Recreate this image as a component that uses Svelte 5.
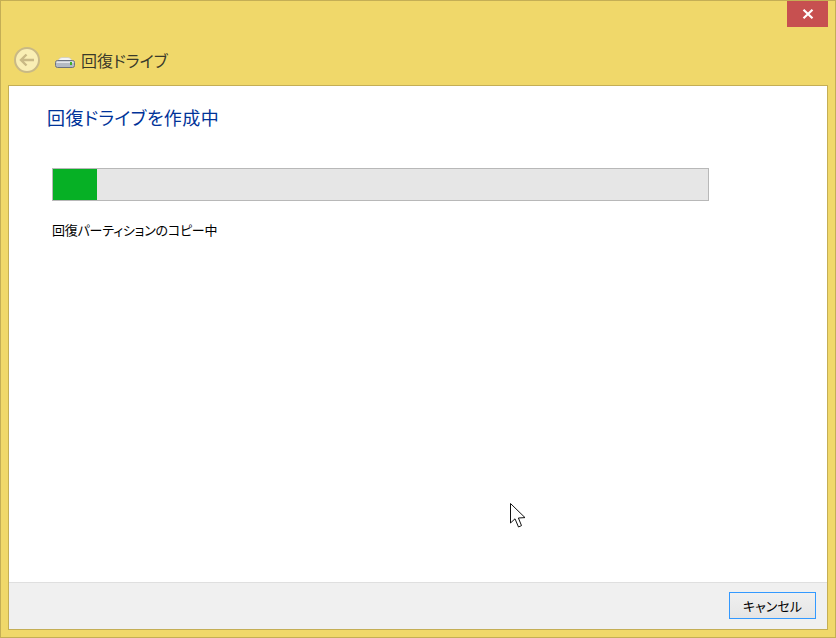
<script>
    const title = "回復ドライブ";
    const heading = "回復ドライブを作成中";
    const status = "回復パーティションのコピー中";
    let progress = 6.7;
</script>

<div class="window">
    <div class="titlebar">
        <button class="close" type="button" aria-label="閉じる">
            <svg width="12" height="10" viewBox="0 0 12 10">
                <path d="M1.5 0.8 L10.5 9.2 M10.5 0.8 L1.5 9.2" stroke="#fff" stroke-width="2.2" fill="none" />
            </svg>
        </button>
    </div>
    <div class="navbar">
        <div class="back">
            <svg width="16" height="14" viewBox="0 0 16 14">
                <path d="M7.5 1.5 L2 7 L7.5 12.5 M2.5 7 H15" stroke="#c9b985" stroke-width="2.4" fill="none" />
            </svg>
        </div>
        <svg class="drive" width="20" height="11" viewBox="0 0 20 11">
            <path d="M3 4 Q4 0.5 7 0.5 H13 Q16 0.5 17 4 Z" fill="#f4f4f4" stroke="#c4c4c4" stroke-width="0.6" />
            <rect x="0.5" y="3.5" width="19" height="7" rx="2" fill="#b4bac4" stroke="#6c7280" />
            <rect x="1.5" y="4.5" width="17" height="1.5" fill="#e4e6ea" />
            <rect x="15" y="5" width="2" height="3" fill="#3fae2a" />
        </svg>
        <span class="title">{title}</span>
    </div>
    <div class="client">
        <div class="main">
            <h1>{heading}</h1>
            <div class="track">
                <div class="bar" style="width: {progress}%"></div>
            </div>
            <p>{status}</p>
        </div>
        <div class="footer">
            <button class="cancel" type="button">キャンセル</button>
        </div>
    </div>
    <svg class="cursor" width="17" height="26" viewBox="0 0 17 26">
        <path d="M0.5 0.5 V20 L5 15.8 L8.5 24 L11.5 22.6 L8.4 15 L15 14.6 Z" fill="#fff" stroke="#111" stroke-width="1" />
    </svg>
</div>

<style>
    :global(body) {
        margin: 0;
        background: #f0d86a;
    }

    .window {
        position: relative;
        box-sizing: border-box;
        width: 836px;
        height: 638px;
        display: flex;
        flex-direction: column;
        background: #f0d86a;
        border: 1px solid #c4ae55;
        font-family: "Noto Sans CJK JP", "Liberation Sans", sans-serif;
        font-feature-settings: "palt";
        overflow: hidden;
    }

    .titlebar {
        height: 26px;
        display: flex;
        justify-content: flex-end;
        padding-right: 7px;
        flex: none;
    }

    .close {
        width: 41px;
        height: 26px;
        padding: 0;
        border: 0;
        background: #c75050;
        display: flex;
        align-items: center;
        justify-content: center;
    }

    .navbar {
        height: 58px;
        flex: none;
        display: flex;
        align-items: center;
        padding: 8px 0 0 13px;
        box-sizing: border-box;
    }

    .back {
        box-sizing: border-box;
        width: 26px;
        height: 26px;
        border-radius: 50%;
        border: 2px solid #c9b985;
        background: #f9eeb4;
        display: flex;
        align-items: center;
        justify-content: center;
    }

    .drive {
        margin-left: 15px;
        margin-top: 4px;
    }

    .title {
        margin-left: 6px;
        font-size: 16px;
        color: #3a3a2a;
    }

    .client {
        flex: 1;
        margin: 0 7px 7px 7px;
        border: 1px solid #c4ae55;
        background: #fff;
        display: flex;
        flex-direction: column;
        min-height: 0;
    }

    .main {
        flex: 1;
        padding: 18px 0 0 38px;
    }

    h1 {
        margin: 0;
        font-size: 18px;
        font-weight: 400;
        line-height: 26px;
        color: #003399;
        letter-spacing: 0.4px;
    }

    .track {
        box-sizing: border-box;
        width: 657px;
        height: 33px;
        margin: 38px 0 0 5px;
        border: 1px solid #b8b8b8;
        background: #e6e6e6;
    }

    .bar {
        height: 100%;
        background: #06b025;
    }

    p {
        margin: 19px 0 0 5px;
        font-size: 13px;
        line-height: 20px;
        color: #000;
        letter-spacing: -0.2px;
    }

    .footer {
        flex: none;
        box-sizing: border-box;
        height: 47px;
        background: #f0f0f0;
        border-top: 1px solid #dfdfdf;
        display: flex;
        justify-content: flex-end;
        align-items: flex-start;
        padding: 9px 11px 0 0;
    }

    .cancel {
        box-sizing: border-box;
        width: 87px;
        height: 27px;
        padding: 0;
        border: 1px solid #3399ff;
        background: linear-gradient(#f0f0f0, #e5e5e5);
        font-family: inherit;
        font-feature-settings: inherit;
        font-size: 13px;
        color: #000;
    }

    .cursor {
        position: absolute;
        left: 509px;
        top: 502px;
    }
</style>
